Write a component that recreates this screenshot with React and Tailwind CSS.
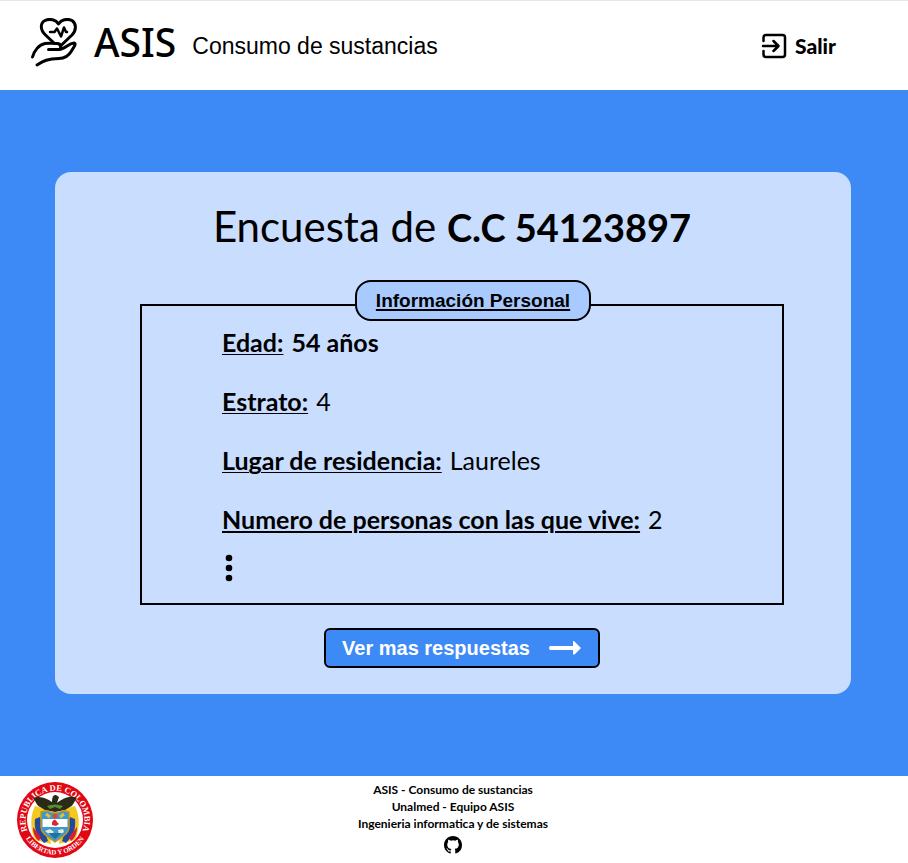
import React from "react";

function CareLogo() {
  return (
    <svg viewBox="0 0 48 52" className="h-[52px] w-12 shrink-0" fill="none" stroke="#000" strokeWidth="3" strokeLinecap="round" strokeLinejoin="round" aria-hidden="true">
      <path d="M24.500 25.500 L15.500 17 C10 12 10 5 15 2.500 C20 0 26 2 28.500 6 C31 2 37 0 42 2.500 C47 6 46 13 42 17 L31 27.500" />
      <path d="M20 14 H24.500 L27 10.500 L31 18.500 L34 9.500 L36 14 H37" strokeWidth="2.500" />
      <path d="M2.500 39 C4 33 9 26.500 15 25.500 C20 25 22 25.500 27 25.500 C31.500 25.500 32 31.500 28 31.500 H18.500" />
      <path d="M29 31.500 C35 31.500 38 25.500 44 25 C47 25.500 43 30 41.500 33 C38 39 34 40.500 29 40.500 C18 40.500 13 43 7 47" />
    </svg>
  );
}

function ExitIcon() {
  return (
    <svg viewBox="0 0 26 26" className="size-[26px]" fill="none" stroke="#000" strokeWidth="2.500" strokeLinecap="round" strokeLinejoin="round" aria-hidden="true">
      <path d="M2.500 8 V4.500 Q2.500 2 5 2 H21.500 Q24 2 24 4.500 V21.500 Q24 24 21.500 24 H5 Q2.500 24 2.500 21.500 V18" />
      <path d="M2 13 H17 M12.500 8 L17.500 13 L12.500 18" />
    </svg>
  );
}

function Crest() {
  return (
    <svg viewBox="0 0 78 78" className="size-[78px] shrink-0" role="img" aria-label="República de Colombia">
      <defs>
        <path id="arcTop" d="M13.500 54 A29.500 29.500 0 1 1 64.500 54" />
        <path id="arcBottom" d="M8.300 55 A34.700 34.700 0 0 0 69.700 55" />
      </defs>
      <circle cx="39" cy="39" r="38" fill="#e30613" />
      <circle cx="39" cy="39" r="28" fill="#fff" />
      <g fill="#fff" fontFamily="'Liberation Serif', serif" fontWeight="700" fontSize="8.500">
        <text textAnchor="middle"><textPath href="#arcTop" startOffset="50%">REPUBLICA DE COLOMBIA</textPath></text>
        <text textAnchor="middle" fontSize="7"><textPath href="#arcBottom" startOffset="50%">LIBERTAD Y ORDEN</textPath></text>
      </g>
      <path d="M19 25 C14 35 14 48 19 59 L35 63 L30 28 Z" fill="#f5ca20" />
      <path d="M59 25 C64 35 64 48 59 59 L43 63 L48 28 Z" fill="#f5ca20" />
      <path d="M19 38 C18 47 20 54 28 62 L32 60 L24 36 Z M59 38 C60 47 58 54 50 62 L46 60 L54 36 Z" fill="#24489c" />
      <path d="M17 46 C17 52 19 57 23 60 L25 56 Z M61 46 C61 52 59 57 55 60 L53 56 Z" fill="#d51f32" />
      <path d="M17 17 C24 14 32 18 36 21 Q36 13 40 14 L43 16 L41 22 C47 17 55 14 61 17 C58 20 58 24 54 26 L49 29 L39 31 L29 29 L24 26 C20 24 20 20 17 17 Z" fill="#292b16" />
      <path d="M31 25 Q39 22 47 25 L44 28 L39 26 L34 28 Z" fill="#5e8b31" />
      <path d="M25 31 Q31 29 34 31 Q39 33 44 31 Q48 29 53 31 V46 C53 54 43 57 39 61 C35 57 25 54 25 46 Z" fill="#3b98d1" stroke="#be9820" strokeWidth="1.500" />
      <path d="M26.500 38 H51.500 V46 H26.500 Z" fill="#fff" />
      <path d="M30 33 L34 36 M48 33 L44 36" stroke="#e7bd32" strokeWidth="3" />
      <circle cx="39" cy="35" r="2.500" fill="#d64b35" />
      <path d="M36 44 V41 Q39 36 41 41 L43 43 L40 45 Z" fill="#dc2734" />
      <path d="M29 50 L34 48 L38 51 L34 54 Z M42 49 L47 48 L48 51 L43 54 Z" fill="#e8edcf" />
      <path d="M32 52 H46 L39 58 Z" fill="#23729d" />
    </svg>
  );
}

function GithubLogo() {
  return (
    <svg viewBox="0 0 16 16" className="size-[18px]" fill="#000" aria-hidden="true">
      <path d="M8 0C3.580 0 0 3.580 0 8c0 3.540 2.290 6.530 5.470 7.590.400.070.550-.170.550-.380 0-.190-.010-.820-.010-1.490-2.010.370-2.530-.490-2.690-.940-.090-.230-.480-.940-.820-1.130-.280-.150-.680-.520-.010-.530.630-.010 1.080.580 1.230.820.720 1.210 1.870.870 2.330.660.070-.520.280-.870.510-1.070-1.780-.200-3.640-.890-3.640-3.950 0-.870.310-1.590.820-2.150-.080-.200-.360-1.020.080-2.120 0 0 .670-.210 2.200.820a7.600 7.600 0 0 1 4 0c1.530-1.040 2.200-.820 2.200-.820.440 1.100.160 1.920.080 2.120.510.560.820 1.270.820 2.150 0 3.070-1.870 3.750-3.650 3.950.290.250.540.730.540 1.480 0 1.070-.010 1.930-.010 2.200 0 .210.150.460.550.380A8 8 0 0 0 16 8c0-4.420-3.580-8-8-8Z" />
    </svg>
  );
}

const answers = [
  { label: "Edad:", value: "54 años", strong: true },
  { label: "Estrato:", value: "4" },
  { label: "Lugar de residencia:", value: "Laureles" },
  { label: "Numero de personas con las que vive:", value: "2", thick: true },
];

export default function App() {
  return (
    <div className="flex min-h-screen flex-col bg-[#3d8af7] font-['Lato',sans-serif] text-black">
      <header className="flex h-[90px] items-center justify-between border-t border-gray-200 bg-white pr-[72px] pb-1 pl-[30px]">
        <div className="flex items-center">
          <CareLogo />
          <span className="ml-4 pb-1 font-['Noto_Sans',sans-serif] text-[39px] leading-none font-medium">ASIS</span>
          <span className="ml-4 pt-1 font-['Liberation_Sans',sans-serif] text-[23px] leading-7">Consumo de sustancias</span>
        </div>
        <button type="button" className="flex items-center gap-2 pt-1 text-[21px] leading-7 font-black">
          <ExitIcon />
          Salir
        </button>
      </header>

      <main className="flex grow flex-col justify-center pr-[57px] pl-[55px]">
        <section className="flex flex-col rounded-2xl bg-[#c9ddff] pt-7 pr-[67px] pb-[26px] pl-[85px]">
          <h1 className="mr-5 text-center text-[42px] leading-[52px]">
            Encuesta de <strong className="text-[38px] leading-none font-bold">C.C 54123897</strong>
          </h1>
          <div className="mt-[52px] flex flex-col border-2 border-black pb-[21px] pl-20">
            <h2 className="-mt-[26px] mr-[58px] self-center rounded-2xl border-2 border-black bg-[#a8caff] px-[19px] py-1 font-['Liberation_Sans',sans-serif] text-[19px] leading-[29px] font-bold underline decoration-2 underline-offset-2">
              Información Personal
            </h2>
            <dl className="flex flex-col gap-[23px] pt-[3px] text-[25px] leading-9">
              {answers.map((a) => (
                <div key={a.label} className="flex gap-2">
                  <dt className={a.thick ? "font-bold underline decoration-2 underline-offset-2" : "font-bold underline decoration-1 underline-offset-2"}>{a.label}</dt>
                  <dd className={a.strong ? "font-bold" : "font-normal"}>{a.value}</dd>
                </div>
              ))}
            </dl>
            <svg viewBox="0 0 14 28" className="mt-[17px] h-7 w-3.5" aria-hidden="true">
              <circle cx="7" cy="4" r="3.300" /><circle cx="7" cy="14" r="3.300" /><circle cx="7" cy="24" r="3.300" />
            </svg>
          </div>
          <button type="button" className="mt-[23px] flex h-10 items-center gap-[18px] self-center rounded-md border-2 border-black bg-[#3d8af7] px-4 font-['Liberation_Sans',sans-serif] text-[20px] font-bold text-white">
            Ver mas respuestas
            <svg viewBox="0 0 34 16" className="h-4 w-[34px]" fill="#fff" aria-hidden="true">
              <path d="M2 6 H25 V2 Q25 0 27 2 L33 8 L27 14 Q25 16 25 13 V10 H2 Q0 8 2 6 Z" />
            </svg>
          </button>
        </section>
      </main>

      <footer className="grid h-[87px] grid-cols-[1fr_auto_1fr] items-center bg-white pl-4">
        <Crest />
        <div className="flex flex-col items-center pr-[18px] pb-1 text-center text-[12px] leading-[17px] font-bold">
          <p>ASIS - Consumo de sustancias</p>
          <p>Unalmed - Equipo ASIS</p>
          <p>Ingenieria informatica y de sistemas</p>
          <a href="#github" aria-label="GitHub" className="mt-1"><GithubLogo /></a>
        </div>
      </footer>
    </div>
  );
}
